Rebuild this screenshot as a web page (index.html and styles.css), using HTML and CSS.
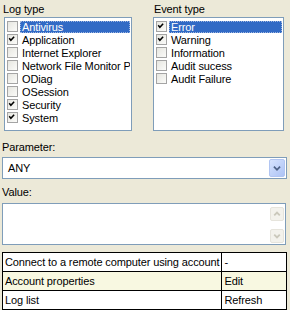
FILE: index.html
```html
<!DOCTYPE html>
<html lang="en">
<head>
  <meta charset="UTF-8">
  <title>Event log filter</title>
  <link rel="stylesheet" href="styles.css">
</head>
<body>
  <div class="lists">
    <div class="group group-log">
      <div class="caption">Log type</div>
      <div class="listbox">
        <div class="item"><span class="check"></span><span class="text selected">Antivirus</span></div>
        <div class="item"><span class="check on"><svg viewBox="0 0 11 11"><polyline points="2.5,5 4.5,7.5 8.5,3"/></svg></span><span class="text">Application</span></div>
        <div class="item"><span class="check"></span><span class="text">Internet Explorer</span></div>
        <div class="item"><span class="check"></span><span class="text">Network File Monitor Pr</span></div>
        <div class="item"><span class="check"></span><span class="text">ODiag</span></div>
        <div class="item"><span class="check"></span><span class="text">OSession</span></div>
        <div class="item"><span class="check on"><svg viewBox="0 0 11 11"><polyline points="2.5,5 4.5,7.5 8.5,3"/></svg></span><span class="text">Security</span></div>
        <div class="item"><span class="check on"><svg viewBox="0 0 11 11"><polyline points="2.5,5 4.5,7.5 8.5,3"/></svg></span><span class="text">System</span></div>
      </div>
    </div>
    <div class="group group-event">
      <div class="caption">Event type</div>
      <div class="listbox">
        <div class="item"><span class="check on"><svg viewBox="0 0 11 11"><polyline points="2.5,5 4.5,7.5 8.5,3"/></svg></span><span class="text selected">Error</span></div>
        <div class="item"><span class="check on"><svg viewBox="0 0 11 11"><polyline points="2.5,5 4.5,7.5 8.5,3"/></svg></span><span class="text">Warning</span></div>
        <div class="item"><span class="check"></span><span class="text">Information</span></div>
        <div class="item"><span class="check"></span><span class="text">Audit sucess</span></div>
        <div class="item"><span class="check"></span><span class="text">Audit Failure</span></div>
      </div>
    </div>
  </div>

  <div class="caption field-caption">Parameter:</div>
  <div class="combo">
    <span class="combo-value">ANY</span>
    <span class="combo-btn"><svg viewBox="0 0 16 17"><polyline points="4.5,7 8,10.5 11.5,7"/></svg></span>
  </div>

  <div class="caption field-caption value-caption">Value:</div>
  <div class="memo">
    <div class="memo-text"></div>
    <div class="scrollbar">
      <span class="sb-btn"><svg viewBox="0 0 13 13"><polyline points="3.5,8 6.5,5 9.5,8"/></svg></span>
      <span class="sb-btn"><svg viewBox="0 0 13 13"><polyline points="3.5,5 6.5,8 9.5,5"/></svg></span>
    </div>
  </div>

  <table class="props">
    <tr><td class="name">Connect to a remote computer using account</td><td class="val">-</td></tr>
    <tr class="alt"><td class="name">Account properties</td><td class="val">Edit</td></tr>
    <tr><td class="name">Log list</td><td class="val">Refresh</td></tr>
  </table>
</body>
</html>
```

FILE: styles.css
```css
/* Grundlayout im XP-Stil */
* { box-sizing: border-box; }
body {
  margin: 0;
  background: #ece9d8;
  font-family: "Liberation Sans", Arial, sans-serif;
  font-size: 11px;
  letter-spacing: -0.12px;
  color: #000;
}
.caption {
  height: 14px;
  line-height: 13px;
  margin-left: -1px;
}

/* Listen mit Checkboxen */
.lists {
  display: flex;
  gap: 21px;
  padding: 3px 0 0 4px;
}
.group-log { width: 128px; }
.group-event { width: 131px; }
.group-event .caption { margin-left: 1px; }
.listbox {
  height: 114px;
  background: #fff;
  border: 1px solid #7f9db9;
  padding: 2px 1px 0 2px;
  overflow: hidden;
}
.item {
  display: flex;
  align-items: center;
  height: 13px;
  white-space: nowrap;
}
.check {
  flex: none;
  width: 11px;
  height: 11px;
  border: 1px solid #a4a4a4;
  background: linear-gradient(135deg, #e6e6e0, #fbfbf9);
  margin-right: 2px;
}
.check svg { display: block; width: 9px; height: 9px; margin: 0; }
.check polyline {
  fill: none;
  stroke: #000;
  stroke-width: 1.8;
  transform: translate(-1px, -1px);
}
.text {
  padding: 0 2px;
  height: 12px;
  line-height: 12px;
  overflow: hidden;
}
.text.selected {
  flex: 1;
  background: #316ac5;
  color: #fff;
  outline: 1px dotted #9fb6e0;
  outline-offset: -1px;
}

/* Parameter-Feld */
.field-caption { margin: 10px 0 2px 2px; }
.value-caption { margin: 7px 0 3px 2px; }
.combo {
  display: flex;
  align-items: center;
  justify-content: space-between;
  height: 22px;
  margin: 0 3px 0 2px;
  background: #fff;
  border: 1px solid #7f9db9;
  padding: 0 1px 0 5px;
}
.combo-btn {
  width: 16px;
  height: 18px;
  border: 1px solid #b1c5f2;
  border-radius: 2px;
  background: linear-gradient(135deg, #d6e3fd, #adc3f5);
}
.combo-btn svg { display: block; width: 14px; height: 16px; }
.combo-btn polyline {
  fill: none;
  stroke: #4d6185;
  stroke-width: 2;
}

/* Wert-Feld */
.memo {
  display: flex;
  height: 42px;
  margin: 0 4px 0 2px;
  background: #fff;
  border: 1px solid #7f9db9;
}
.memo-text { flex: 1; }
.scrollbar {
  display: flex;
  flex-direction: column;
  justify-content: space-between;
  padding: 3px 1px 1px 0;
}
.sb-btn {
  width: 14px;
  height: 14px;
  border: 1px solid #e6e4dc;
  border-radius: 2px;
  background: #f3f2ec;
}
.sb-btn svg { display: block; width: 12px; height: 12px; }
.sb-btn polyline {
  fill: none;
  stroke: #cac8bb;
  stroke-width: 2;
}

/* Eigenschaftstabelle */
.props {
  border-collapse: collapse;
  margin: 7px 0 0 2px;
  width: 285px;
  background: #fff;
}
.props td {
  border: 1px solid #000;
  height: 19px;
  padding: 0 2px;
  white-space: nowrap;
}
.props td.val { width: 65px; }
.props tr.alt td { background: #f8f8e1; }
```
